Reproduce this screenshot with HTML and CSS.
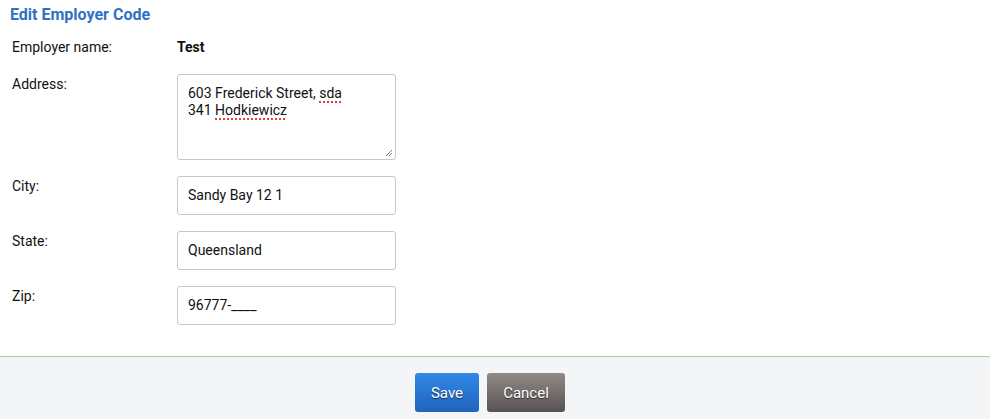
FILE: index.html
```html
<!DOCTYPE html>
<html>
<head>
<meta charset="utf-8">
<link rel="stylesheet" href="styles.css">
</head>
<body>
<div class="page">
  <h1 class="title">Edit Employer Code</h1>
  <div class="form">
    <div class="label label-plain">Employer name:</div>
    <div class="value">Test</div>

    <div class="label">Address:</div>
    <div class="textarea">
      <div>603 Frederick Street, <span class="sp">sda</span></div>
      <div>341 <span class="sp">Hodkiewicz</span></div>
      <svg class="grip" width="8" height="8" viewBox="0 0 8 8"><path d="M1 7 L7 1 M4 7 L7 4" stroke="#777" stroke-width="1" fill="none"/></svg>
    </div>

    <div class="label">City:</div>
    <div class="input">Sandy Bay 12 1</div>

    <div class="label">State:</div>
    <div class="input">Queensland</div>

    <div class="label">Zip:</div>
    <div class="input">96777-____</div>
  </div>
  <div class="footer">
    <button class="btn btn-save">Save</button>
    <button class="btn btn-cancel">Cancel</button>
  </div>
</div>
</body>
</html>
```

FILE: styles.css
```css
html, body {
  margin: 0;
  padding: 0;
  background: #ffffff;
}
body {
  font-family: Roboto, "Liberation Sans", Arial, sans-serif;
  font-size: 14px;
  color: #111;
}
.page {
  width: 990px;
}
.title {
  margin: 0;
  padding: 5px 0 0 10px;
  font-size: 16px;
  line-height: 19px;
  font-weight: 700;
  color: #2f72c4;
}
.form {
  display: grid;
  grid-template-columns: 165px 219px;
  row-gap: 16px;
  padding: 15px 0 31px 12px;
  border-bottom: 1px solid #9ed699;
}
.label {
  padding-top: 2px;
  line-height: 16px;
}
.label-plain {
  padding-top: 0;
}
.value {
  font-weight: 700;
  line-height: 16px;
  margin-bottom: 3px;
}
.textarea {
  position: relative;
  box-sizing: border-box;
  height: 86px;
  border: 1px solid #c8c8c8;
  border-radius: 3px;
  padding: 10px 10px;
  line-height: 17px;
}
.sp {
  text-decoration: underline dotted #e0403a;
  text-decoration-thickness: 2px;
  text-underline-offset: 3px;
}
.grip {
  position: absolute;
  right: 2px;
  bottom: 2px;
}
.input {
  box-sizing: border-box;
  height: 39px;
  border: 1px solid #c8c8c8;
  border-radius: 3px;
  padding: 0 10px;
  line-height: 37px;
}
.footer {
  background: #f4f5f7;
  display: flex;
  justify-content: center;
  gap: 8px;
  padding: 16px 10px 8px 0;
}
.btn {
  height: 39px;
  border: none;
  border-radius: 3px;
  color: #fff;
  font-family: Roboto, "Liberation Sans", Arial, sans-serif;
  font-size: 15px;
  text-shadow: 0 1px 1px rgba(0,0,0,0.6);
  padding: 0;
}
.btn-save {
  width: 64px;
  background: linear-gradient(#3189e8, #1f63bc);
}
.btn-cancel {
  width: 78px;
  background: linear-gradient(#918a87, #575352);
}
```
